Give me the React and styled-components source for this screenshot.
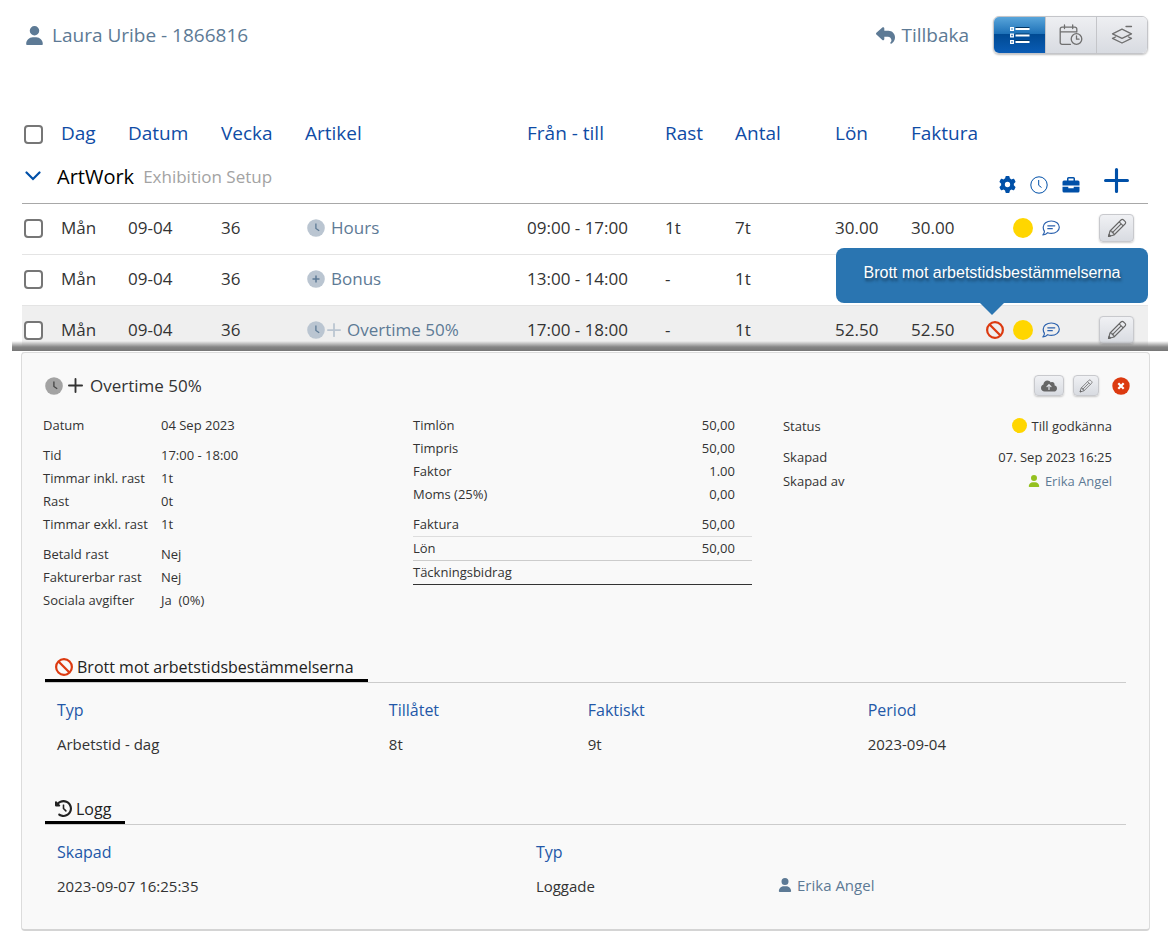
import React, { useState } from 'react'
import styled, { createGlobalStyle, css } from 'styled-components'
import { FaUser, FaReply, FaGear, FaBan, FaCloudArrowUp, FaClockRotateLeft } from 'react-icons/fa6'

const rader = [
  { id: 1, dag: 'Mån', datum: '09-04', vecka: '36', tid: '09:00 - 17:00', rast: '1t', antal: '7t', lon: '30.00', faktura: '30.00', artikel: 'Hours', ikon: 'klocka' },
  { id: 2, dag: 'Mån', datum: '09-04', vecka: '36', tid: '13:00 - 14:00', rast: '-', antal: '1t', artikel: 'Bonus', ikon: 'plus' },
  { id: 3, dag: 'Mån', datum: '09-04', vecka: '36', tid: '17:00 - 18:00', rast: '-', antal: '1t', lon: '52.50', faktura: '52.50', artikel: 'Overtime 50%', ikon: 'overtid', brott: true },
]

const tider = [
  [['Datum', '04 Sep 2023']],
  [['Tid', '17:00 - 18:00'], ['Timmar inkl. rast', '1t'], ['Rast', '0t'], ['Timmar exkl. rast', '1t']],
  [['Betald rast', 'Nej'], ['Fakturerbar rast', 'Nej'], ['Sociala avgifter', 'Ja \u00a0(0%)']],
]

const belopp = [['Timlön', '50,00'], ['Timpris', '50,00'], ['Faktor', '1.00'], ['Moms (25%)', '0,00']]

const KlockaFylld = ({ size = 18, color, hand }) => (
  <svg width={size} height={size} viewBox="0 0 18 18" aria-hidden="true">
    <circle cx="9" cy="9" r="8.8" fill={color} />
    <path d="M8.9 4.5v5l3.3 2.2" fill="none" stroke={hand} strokeWidth="1.3" />
  </svg>
)

const PlusFylld = ({ color, hand }) => (
  <svg width="18" height="18" viewBox="0 0 18 18" aria-hidden="true">
    <circle cx="9" cy="9" r="8.8" fill={color} />
    <path d="M9 5.5v7M5.5 9h7" stroke={hand} strokeWidth="1.5" />
  </svg>
)

const Plus = ({ size, color, width = 2 }) => (
  <svg width={size} height={size} viewBox="0 0 16 16" aria-hidden="true">
    <path d="M8 1v14M1 8h14" stroke={color} strokeWidth={width} strokeLinecap="round" />
  </svg>
)

const Klocka = () => (
  <svg width="18" height="18" viewBox="0 0 18 18" fill="none" stroke="#0050a8" aria-hidden="true">
    <circle cx="9" cy="9" r="8.2" />
    <path d="M8.7 4v5.3l2.8 2.2" />
  </svg>
)

const Portfolj = () => (
  <svg width="18" height="18" viewBox="0 0 18 18" fill="#0050a8" aria-hidden="true">
    <path d="M5 4.5V2.6A1.6 1.6 0 0 1 6.6 1h4.8A1.6 1.6 0 0 1 13 2.6v1.9h3A1.5 1.5 0 0 1 17.5 6v3.5H.5V6A1.5 1.5 0 0 1 2 4.5zM6.5 4.500h5V2.500h-5z" fillRule="evenodd" />
    <path d="M.5 10.700h5.800v1.600h5.400v-1.600h5.800v4.300a1.500 1.500 0 0 1-1.500 1.500H2A1.500 1.500 0 0 1 .5 15z" />
  </svg>
)

const Kommentar = () => (
  <svg width="18" height="16" viewBox="0 0 18 16" fill="none" stroke="#2c62ae" strokeWidth="1.2" strokeLinecap="round" strokeLinejoin="round" aria-hidden="true">
    <path d="M9.300 1c4.500 0 8 2.700 8 6.200s-3.500 6.200-8 6.200c-1.300 0-2.500-.2-3.600-.7C4.600 14 3 14.800.9 14.900c1-1.100 1.600-2.400 1.500-3.700C1.600 10.100 1.200 8.700 1.200 7.200 1.200 3.700 4.800 1 9.300 1z" />
    <path d="M5.800 5.800h7M5.800 8.700h4.500" />
  </svg>
)

const Penna = ({ size = 20 }) => (
  <svg width={size} height={size} viewBox="0 0 20 20" fill="none" stroke="#666" strokeWidth="1.1" strokeLinejoin="round" aria-hidden="true">
    <path d="M1.500 18.500L3 13 14 2c.8-.8 1.800-.8 2.600 0L18 3.400c.8.8.8 1.800 0 2.600L7 17z" />
    <path d="M3 13l2 .3.200 1.500 1.500.2.300 2M12.200 3.800l4 4M5.200 14.800l8.700-8.700" />
    <path d="M1.500 18.500l.6-2 1.400 1.400z" fill="#666" />
  </svg>
)

const Lista = () => (
  <svg width="22" height="20" viewBox="0 0 22 20" aria-hidden="true">
    <path d="M6.500 2.500h14M6.500 9h14M6.500 15.500h14" stroke="#023765" strokeWidth="1" />
    <path d="M6.500 4h14M6.500 10.500h14M6.500 17h14" stroke="#fff" strokeWidth="2" />
    <path d="M1.700 2.700h2.600v2.600H1.700zM1.700 9.200h2.600v2.600H1.700zM1.700 15.700h2.600v2.600H1.700z" fill="none" stroke="#fff" strokeWidth="1.3" />
  </svg>
)

const Kalender = () => (
  <svg width="24" height="22" viewBox="0 0 24 22" fill="none" stroke="#6f6f6f" strokeWidth="1.3" strokeLinecap="round" strokeLinejoin="round" aria-hidden="true">
    <path d="M11.500 20.300H3a1.800 1.800 0 0 1-1.800-1.800V5A1.800 1.800 0 0 1 3 3.200h13A1.800 1.800 0 0 1 17.800 5v3M1.200 7.800h16.600M5.500 1v3.500M13.700 1v3.500" />
    <circle cx="17.5" cy="15" r="5.3" />
    <path d="M17.500 12v3.200h2.500" />
  </svg>
)

const Lager = () => (
  <svg width="22" height="20" viewBox="0 0 22 20" fill="none" stroke="#6f6f6f" strokeWidth="1.3" strokeLinejoin="round" strokeLinecap="round" aria-hidden="true">
    <path d="M11 4.200l9.500 4.600L11 13.400 1.500 8.800zM4.500 12L1.500 13.400 11 18l9.500-4.600-3-1.400M15 1.500h5.500" />
  </svg>
)

const Stang = () => (
  <svg width="18" height="18" viewBox="0 0 18 18" aria-hidden="true">
    <circle cx="9" cy="9" r="8.7" fill="#dc3a10" />
    <path d="M6.300 6.300l5.400 5.400M11.700 6.300l-5.400 5.400" stroke="#fff" strokeWidth="2.2" />
  </svg>
)

const Pil = () => (
  <svg width="16" height="10" viewBox="0 0 16 10" aria-hidden="true">
    <path d="M1.500 1.500L8 8l6.500-6.500" fill="none" stroke="#0050a8" strokeWidth="2.2" strokeLinecap="round" />
  </svg>
)

const Artikel = ({ ikon, children }) => (
  <ArtikelNamn href="#">
    {ikon === 'plus'
      ? <PlusFylld color="#bac5d1" hand="#5d7a95" />
      : <KlockaFylld color="#bac5d1" hand="#5d7a95" />}
    {ikon === 'overtid' && <Plus size={14} color="#bac5d1" />}
    <span>{children}</span>
  </ArtikelNamn>
)

const App = () => {
  const [valda, setValda] = useState([])

  const valjRad = (id) => {
    setValda(valda.includes(id) ? valda.filter((v) => v !== id) : [...valda, id])
  }

  const valjAlla = () => {
    setValda(valda.length === rader.length ? [] : rader.map((r) => r.id))
  }

  return (
    <>
      <GlobalStyle />
      <Sida>
        <Topp>
          <Person>
            <FaUser size={19} />
            <span>Laura Uribe - 1866816</span>
          </Person>
          <Tillbaka href="#"><FaReply size={19} />Tillbaka</Tillbaka>
          <Vyer>
            <VyKnapp $aktiv aria-label="Lista"><Lista /></VyKnapp>
            <VyKnapp aria-label="Kalender"><Kalender /></VyKnapp>
            <VyKnapp aria-label="Lager"><Lager /></VyKnapp>
          </Vyer>
        </Topp>

        <Tabell>
          <colgroup>
            <Kol $w="39px" /><Kol $w="67px" /><Kol $w="93px" /><Kol $w="84px" /><Kol />
            <Kol $w="138px" /><Kol $w="70px" /><Kol $w="100px" /><Kol $w="76px" /><Kol $w="74px" />
            <Kol $w="114px" /><Kol $w="49px" />
          </colgroup>
          <thead>
            <tr>
              <Rubrik><Kryss aria-label="Välj alla" checked={valda.length === rader.length} onChange={valjAlla} /></Rubrik>
              <Rubrik>Dag</Rubrik>
              <Rubrik>Datum</Rubrik>
              <Rubrik>Vecka</Rubrik>
              <Rubrik>Artikel</Rubrik>
              <Rubrik>Från - till</Rubrik>
              <Rubrik>Rast</Rubrik>
              <Rubrik>Antal</Rubrik>
              <Rubrik>Lön</Rubrik>
              <Rubrik>Faktura</Rubrik>
              <Rubrik colSpan={2} />
            </tr>
          </thead>
          <tbody>
            <tr>
              <GruppCell colSpan={12}>
                <Grupp>
                  <IkonKnapp aria-label="Fäll ihop"><Pil /></IkonKnapp>
                  <Projekt>ArtWork</Projekt>
                  <Aktivitet>Exhibition Setup</Aktivitet>
                  <Verktyg>
                    <IkonKnapp aria-label="Inställningar"><FaGear size={17} /></IkonKnapp>
                    <IkonKnapp aria-label="Timmar"><Klocka /></IkonKnapp>
                    <IkonKnapp aria-label="Uppdrag"><Portfolj /></IkonKnapp>
                  </Verktyg>
                  <LaggTill aria-label="Lägg till"><Plus size={25} color="#0050a8" /></LaggTill>
                </Grupp>
              </GruppCell>
            </tr>
            {rader.map((rad) => (
              <Rad key={rad.id} $markerad={rad.brott}>
                <Cell><Kryss aria-label={`Välj ${rad.artikel}`} checked={valda.includes(rad.id)} onChange={() => valjRad(rad.id)} /></Cell>
                <Cell>{rad.dag}</Cell>
                <Cell>{rad.datum}</Cell>
                <Cell>{rad.vecka}</Cell>
                <Cell><Artikel ikon={rad.ikon}>{rad.artikel}</Artikel></Cell>
                <Cell>{rad.tid}</Cell>
                <Cell>{rad.rast}</Cell>
                <Cell>{rad.antal}</Cell>
                <Cell>{rad.lon}</Cell>
                <Cell>{rad.faktura}</Cell>
                <Cell>
                  <Status>
                    {rad.brott && (
                      <Varning>
                        <FaBan size={18} />
                        <Tips role="tooltip">Brott mot arbetstidsbestämmelserna</Tips>
                      </Varning>
                    )}
                    <Prick $size={20} />
                    <Kommentar />
                  </Status>
                </Cell>
                <Cell><Knapp $w={35} $h={28} aria-label="Redigera"><Penna /></Knapp></Cell>
              </Rad>
            ))}
          </tbody>
        </Tabell>

        <Skugga />

        <Panel>
          <PanelTopp>
            <KlockaFylld color="#a3a3a3" hand="#444" />
            <Plus size={15} color="#333" />
            <PanelTitel>Overtime 50%</PanelTitel>
            <Atgarder>
              <Knapp $w={30} $h={21} aria-label="Ladda upp"><FaCloudArrowUp size={16} /></Knapp>
              <Knapp $w={26} $h={21} aria-label="Redigera"><Penna size={14} /></Knapp>
              <StangKnapp aria-label="Stäng"><Stang /></StangKnapp>
            </Atgarder>
          </PanelTopp>

          <Detaljer>
            <div>
              {tider.map((grupp, i) => (
                <Uppgifter key={i}>
                  {grupp.map(([namn, varde]) => (
                    <Par key={namn}><dt>{namn}</dt><dd>{varde}</dd></Par>
                  ))}
                </Uppgifter>
              ))}
            </div>
            <div>
              <Uppgifter>
                {belopp.map(([namn, varde]) => (
                  <Par key={namn} $hoger><dt>{namn}</dt><dd>{varde}</dd></Par>
                ))}
              </Uppgifter>
              <Uppgifter>
                <Par $hoger $linje="#ddd"><dt>Faktura</dt><dd>50,00</dd></Par>
                <Par $hoger $linje="#ccc"><dt>Lön</dt><dd>50,00</dd></Par>
                <Par $hoger $linje="#333"><dt>Täckningsbidrag</dt><dd /></Par>
              </Uppgifter>
            </div>
            <div>
              <Uppgifter>
                <Par $kant><dt>Status</dt><dd><Prick $size={15} />Till godkänna</dd></Par>
              </Uppgifter>
              <Uppgifter>
                <Par $kant><dt>Skapad</dt><dd>07. Sep 2023 16:25</dd></Par>
                <Par $kant><dt>Skapad av</dt><dd><GronIkon /><Lank href="#">Erika Angel</Lank></dd></Par>
              </Uppgifter>
            </div>
          </Detaljer>

          <Sektion>
            <FlikRad>
              <Flik><RodIkon />Brott mot arbetstidsbestämmelserna</Flik>
            </FlikRad>
            <DataTabell>
              <colgroup><Kol $w="30.7%" /><Kol $w="18.4%" /><Kol $w="25.9%" /><Kol /></colgroup>
              <thead>
                <tr><th>Typ</th><th>Tillåtet</th><th>Faktiskt</th><th>Period</th></tr>
              </thead>
              <tbody>
                <tr><td>Arbetstid - dag</td><td>8t</td><td>9t</td><td>2023-09-04</td></tr>
              </tbody>
            </DataTabell>
          </Sektion>

          <Sektion>
            <FlikRad>
              <Flik><FaClockRotateLeft size={17} />Logg</Flik>
            </FlikRad>
            <DataTabell>
              <colgroup><Kol $w="44.3%" /><Kol $w="22.4%" /><Kol /></colgroup>
              <thead>
                <tr><th>Skapad</th><th>Typ</th><th /></tr>
              </thead>
              <tbody>
                <tr>
                  <td>2023-09-07 16:25:35</td>
                  <td>Loggade</td>
                  <td><Lank href="#"><FaUser size={14} />Erika Angel</Lank></td>
                </tr>
              </tbody>
            </DataTabell>
          </Sektion>
        </Panel>
      </Sida>
    </>
  )
}

const GlobalStyle = createGlobalStyle`
  * {
    box-sizing: border-box;
  }

  body {
    margin: 0;
    background: #fff;
    color: #333;
    font-family: 'Open Sans', sans-serif;
  }

  svg {
    display: block;
    flex: none;
  }
`

const Sida = styled.main`
  padding: 16px 0 4px;
`

const Topp = styled.header`
  display: flex;
  align-items: center;
  height: 38px;
  margin: 0 20px 0 25px;
  color: #5d7a95;
  font-size: 19px;
`

const Person = styled.div`
  display: flex;
  align-items: center;
  gap: 8px;
  margin-right: auto;
`

const Tillbaka = styled.a`
  display: flex;
  align-items: center;
  gap: 6px;
  margin-right: 24px;
  color: inherit;
  text-decoration: none;
`

const Vyer = styled.div`
  display: flex;
  border: 1px solid #c4c5c9;
  border-radius: 6px;
  overflow: hidden;
  box-shadow: 0 1px 2px rgba(0, 0, 0, .25);
`

const VyKnapp = styled.button`
  display: flex;
  align-items: center;
  justify-content: center;
  width: 51px;
  height: 36px;
  padding: 0;
  border: none;
  cursor: pointer;
  background: linear-gradient(#eeeff2, #d8dbe1);

  & + & {
    border-left: 1px solid #c4c5c9;
  }

  ${({ $aktiv }) => $aktiv && css`
    background: linear-gradient(#59a5da 0%, #1f72b8 46%, #004a93 48%, #0a5cb5 100%);
  `}
`

const Tabell = styled.table`
  width: calc(100% - 42px);
  margin: 58px 20px 0 22px;
  table-layout: fixed;
  border-collapse: collapse;
  font-size: 17px;
`

const Kol = styled.col`
  width: ${({ $w }) => $w || 'auto'};
`

const Rubrik = styled.th`
  height: 42px;
  padding: 0;
  color: #0f4ca5;
  font-size: 19px;
  font-weight: normal;
  text-align: left;
  white-space: nowrap;
`

const Kryss = styled.input.attrs({ type: 'checkbox' })`
  display: block;
  width: 19px;
  height: 19px;
  margin: 2px 0 0 2px;
  border: 2px solid #767676;
  border-radius: 4px;
  appearance: none;
  background: #fff;

  &:checked {
    border-color: #0050a8;
    background: #0050a8;
  }
`

const GruppCell = styled.td`
  height: 49px;
  padding: 0;
  border-bottom: 1px solid #a8a8a8;
`

const Grupp = styled.div`
  display: flex;
  align-items: center;
  padding: 0 19px 4px 3px;
`

const Projekt = styled.span`
  margin: 0 9px 0 16px;
  color: #000;
  font-size: 20px;
`

const Aktivitet = styled.span`
  margin-right: auto;
  color: #a3a3a3;
`

const Verktyg = styled.div`
  display: flex;
  align-items: center;
  gap: 14px;
  margin: 17px 24px 0 0;
`

const IkonKnapp = styled.button`
  padding: 0;
  border: none;
  background: none;
  color: #0050a8;
  cursor: pointer;
`

const LaggTill = styled(IkonKnapp)`
  margin-top: 8px;
`

const Rad = styled.tr`
  height: 51px;
  background: ${({ $markerad }) => $markerad ? '#efefef' : '#fff'};
`

const Cell = styled.td`
  padding: 0 0 2px;
  border-bottom: 1px solid #e4e4e4;
  white-space: nowrap;
`

const ArtikelNamn = styled.a`
  display: flex;
  align-items: center;
  gap: 2px;
  padding-left: 2px;
  color: #5d7a95;
  text-decoration: none;

  span {
    margin-left: 4px;
  }
`

const Status = styled.div`
  display: flex;
  align-items: center;
  justify-content: flex-end;
  gap: 9px;
  padding-right: 39px;
`

const Varning = styled.div`
  position: relative;
  color: #dc3a10;
`

const Tips = styled.div`
  position: absolute;
  right: -144px;
  bottom: 36px;
  z-index: 2;
  width: 312px;
  padding: 15px 0 20px;
  border-radius: 8px;
  background: #2a75b1;
  color: #fff;
  font-family: 'Liberation Sans', sans-serif;
  font-size: 16px;
  line-height: 20px;
  text-align: center;
  text-shadow: 1px 3px 3px rgba(0, 0, 0, .45);

  &::after {
    content: '';
    position: absolute;
    top: 100%;
    right: 144px;
    border: 12px solid transparent;
    border-top-color: #2a75b1;
    border-bottom: none;
  }
`

const Prick = styled.span`
  width: ${({ $size }) => $size}px;
  height: ${({ $size }) => $size}px;
  border-radius: 50%;
  background: #ffd600;
`

const Knapp = styled.button`
  display: flex;
  align-items: center;
  justify-content: center;
  width: ${({ $w }) => $w}px;
  height: ${({ $h }) => $h}px;
  padding: 0;
  border: 1px solid #c8c9cd;
  border-radius: 4px;
  background: linear-gradient(#f0f1f4, #d8dbe1);
  box-shadow: 0 1px 2px rgba(0, 0, 0, .2);
  color: #666;
  cursor: pointer;
`

const Skugga = styled.div`
  position: relative;
  height: 11px;
  margin: -16px 0 0 12px;
  border-bottom: 1px solid #fff;
  background: linear-gradient(rgba(120, 120, 120, 0), #858585 60%, #777);
`

const Panel = styled.section`
  position: relative;
  margin: 0 18px 0 21px;
  padding: 20px 23px 24px;
  border: 1px solid #dcdcdc;
  border-bottom: 2px solid #d4d4d4;
  border-radius: 4px;
  background: #f9f9f9;
`

const PanelTopp = styled.div`
  display: flex;
  align-items: center;
  gap: 5px;
  height: 26px;
`

const PanelTitel = styled.h2`
  margin: 0 auto 0 2px;
  font-size: 17px;
  font-weight: normal;
`

const Atgarder = styled.div`
  display: flex;
  align-items: center;
  gap: 9px;
`

const StangKnapp = styled(IkonKnapp)`
  margin: 0 -4px 0 4px;
`

const Detaljer = styled.div`
  display: grid;
  grid-template-columns: 34fr 34fr 33fr;
  column-gap: 31px;
  margin: 15px 14px 0 -2px;
  font-size: 13px;
  line-height: 23px;
`

const Uppgifter = styled.dl`
  margin: 0 0 7px;
`

const Par = styled.div`
  display: flex;

  dt {
    width: 118px;
  }

  dd {
    display: flex;
    align-items: center;
    gap: 5px;
    margin: 0;
  }

  ${({ $hoger }) => $hoger && css`
    justify-content: space-between;
    padding-right: 17px;
  `}

  ${({ $kant }) => $kant && css`
    justify-content: space-between;
    line-height: 24px;
  `}

  ${({ $linje }) => $linje && css`
    border-bottom: 1px solid ${$linje};
  `}
`

const Lank = styled.a`
  display: inline-flex;
  align-items: center;
  gap: 5px;
  color: #5d7a95;
  text-decoration: none;
`

const GronIkon = styled(FaUser).attrs({ size: 12 })`
  color: #94c11f;
`

const RodIkon = styled(FaBan).attrs({ size: 18 })`
  color: #dc3a10;
`

const Sektion = styled.section`
  margin-top: 36px;
`

const FlikRad = styled.div`
  display: flex;
  border-bottom: 1px solid #ccc;
`

const Flik = styled.h3`
  display: flex;
  align-items: center;
  gap: 4px;
  height: 27px;
  margin: 0;
  padding: 0 14px 0 10px;
  border-bottom: 3px solid #000;
  color: #222;
  font-size: 16px;
  font-weight: normal;
`

const DataTabell = styled.table`
  width: 100%;
  margin: 10px 0 2px;
  table-layout: fixed;
  border-collapse: collapse;
  font-size: 15px;

  th, td {
    height: 34px;
    padding: 0 0 0 12px;
    font-weight: normal;
    text-align: left;
  }

  th {
    color: #2358a8;
    font-size: 16px;
  }
`

export default App
